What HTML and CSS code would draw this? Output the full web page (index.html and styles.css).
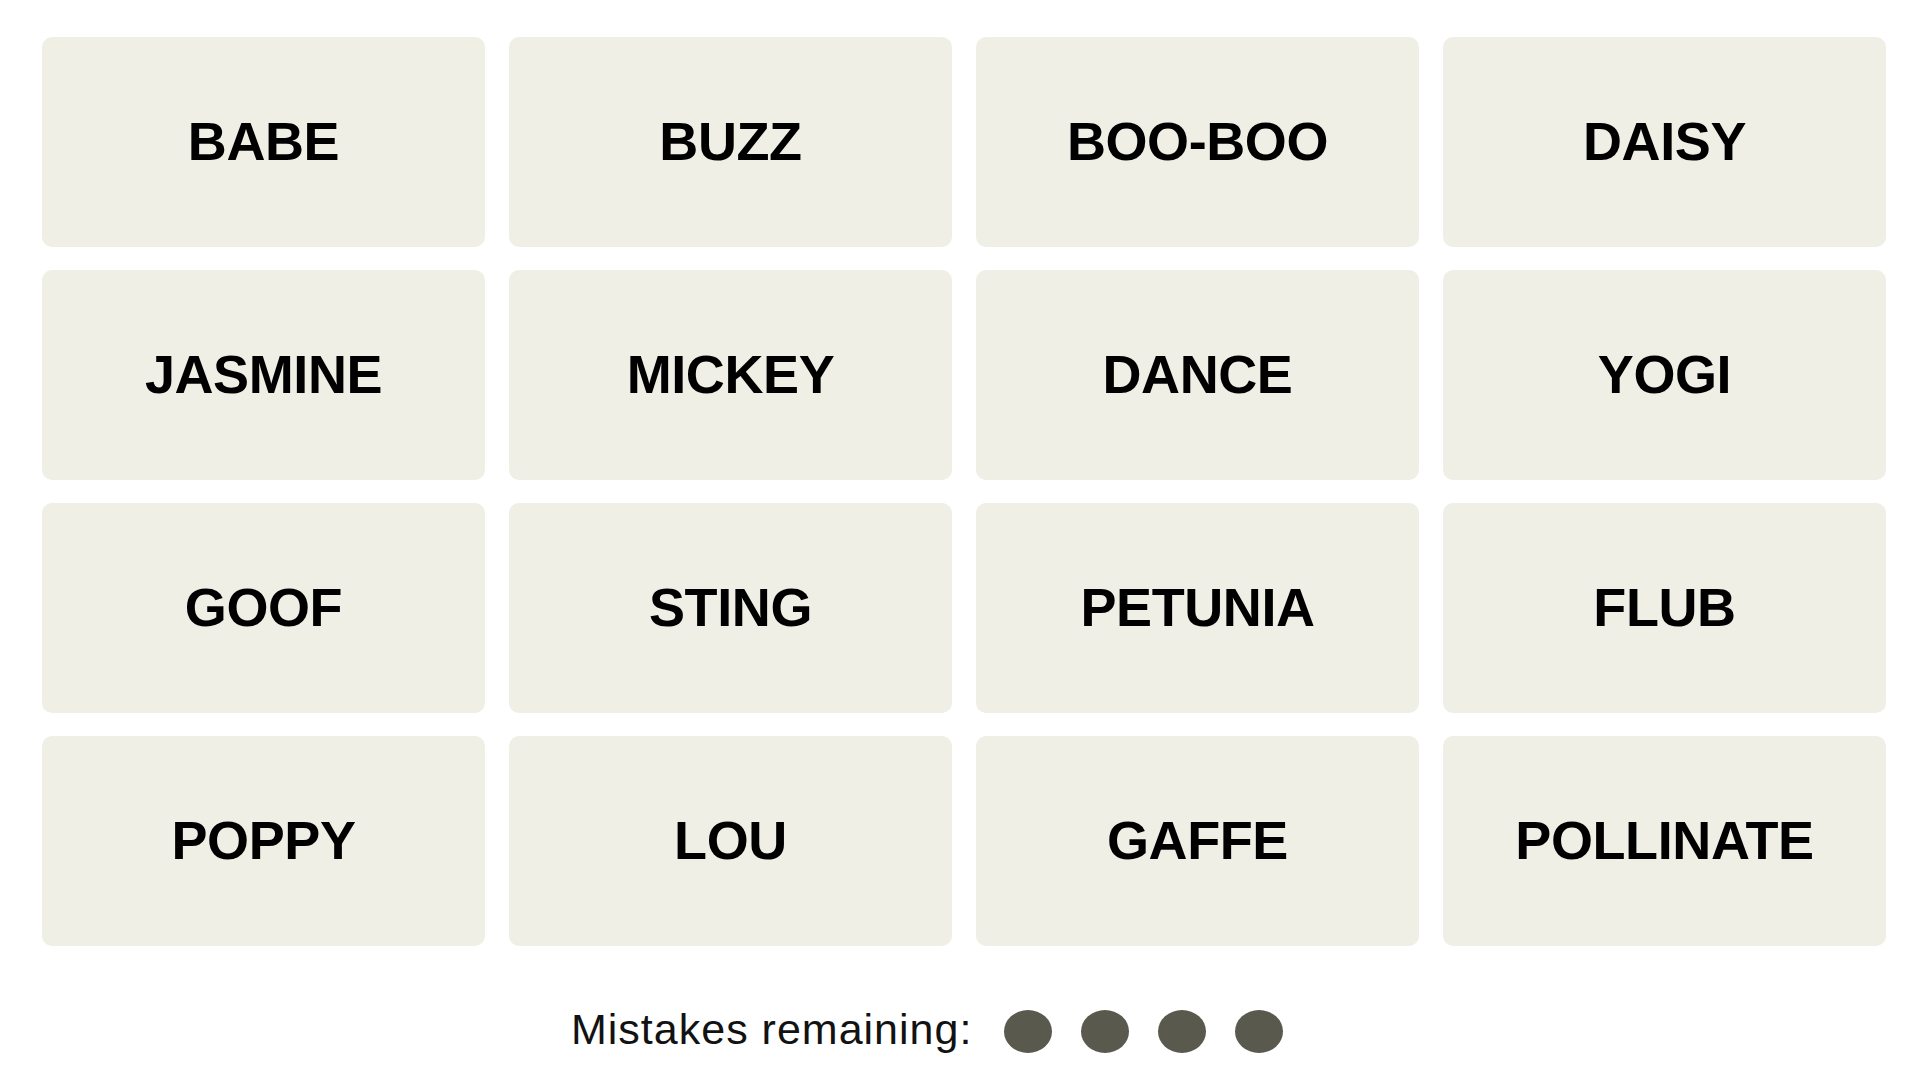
FILE: index.html
```html
<!DOCTYPE html>
<html lang="en">
<head>
<meta charset="utf-8">
<title>Connections</title>
<link rel="stylesheet" href="styles.css">
</head>
<body>
<main class="game">
  <section class="board">
    <div class="tile">BABE</div>
    <div class="tile">BUZZ</div>
    <div class="tile">BOO-BOO</div>
    <div class="tile">DAISY</div>
    <div class="tile">JASMINE</div>
    <div class="tile">MICKEY</div>
    <div class="tile">DANCE</div>
    <div class="tile">YOGI</div>
    <div class="tile">GOOF</div>
    <div class="tile">STING</div>
    <div class="tile">PETUNIA</div>
    <div class="tile">FLUB</div>
    <div class="tile">POPPY</div>
    <div class="tile">LOU</div>
    <div class="tile">GAFFE</div>
    <div class="tile">POLLINATE</div>
  </section>
  <div class="mistakes">
    <span class="mistakes-label">Mistakes remaining:</span>
    <span class="dots">
      <span class="dot"></span>
      <span class="dot"></span>
      <span class="dot"></span>
      <span class="dot"></span>
    </span>
  </div>
</main>
</body>
</html>
```

FILE: styles.css
```css
html, body {
  margin: 0;
  padding: 0;
  background: #ffffff;
}

body {
  font-family: "Liberation Sans", Arial, sans-serif;
  color: #000000;
}

.game {
  width: 1920px;
  height: 1080px;
  overflow: hidden;
}

.board {
  display: grid;
  grid-template-columns: repeat(4, 443px);
  grid-auto-rows: 210px;
  column-gap: 24px;
  row-gap: 23px;
  padding: 37px 0 0 42px;
}

.tile {
  background: #efefe6;
  border-radius: 10px;
  display: flex;
  align-items: center;
  justify-content: center;
  font-weight: 700;
  font-size: 54px;
  letter-spacing: -0.4px;
  color: #000000;
  padding-bottom: 3px;
}

.mistakes {
  display: flex;
  align-items: flex-start;
  margin-top: 59px;
  padding-left: 571px;
}

.mistakes-label {
  font-size: 43px;
  line-height: 48px;
  letter-spacing: 1px;
  color: #121212;
}

.dots {
  display: flex;
  gap: 29px;
  margin-left: 32px;
  margin-top: 5px;
}

.dot {
  width: 48px;
  height: 43px;
  border-radius: 50%;
  background: #5a594e;
}
```
